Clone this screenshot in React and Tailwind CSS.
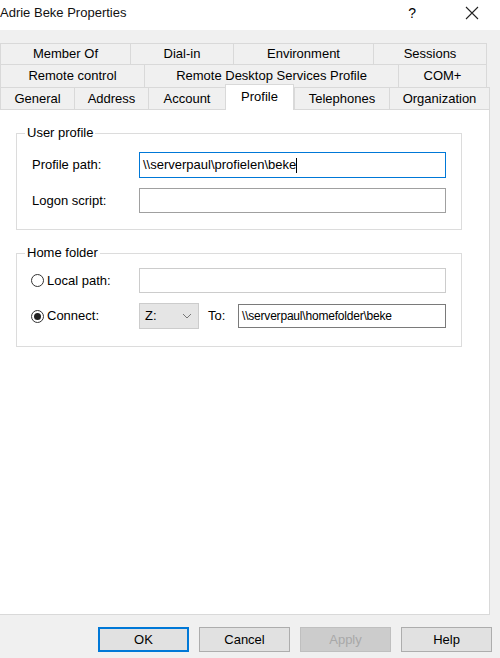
import React from 'react'

const row1 = [
    ['Member Of', 'w-[130px]'],
    ['Dial-in', 'w-[103px]'],
    ['Environment', 'w-[140px]'],
    ['Sessions', 'w-[114px]'],
]
const row2 = [
    ['Remote control', 'w-[144px]'],
    ['Remote Desktop Services Profile', 'w-[254px]'],
    ['COM+', 'w-[89px]'],
]
const row3 = [
    ['General', 'w-[74px]'],
    ['Address', 'w-[74px]'],
    ['Account', 'w-[77px]'],
    ['Profile', 'w-[69px]', true],
    ['Telephones', 'w-[95px]'],
    ['Organization', 'w-[101px]'],
]

function Tab({ label, width, active }) {
    if (active) {
        return (
            <div className={`${width} h-[26px] -mb-px relative z-10 bg-white border border-b-0 border-[#d9d9d9] flex justify-center pt-[2px] shrink-0`}>
                {label}
            </div>
        )
    }
    return (
        <div className={`${width} h-full border-l border-t border-[#d9d9d9] last:border-r flex items-center justify-center shrink-0`}>
            {label}
        </div>
    )
}

function Radio({ checked }) {
    return (
        <span className="w-[13px] h-[13px] rounded-full border border-[#333] bg-white flex items-center justify-center shrink-0">
            {checked && <span className="w-[7px] h-[7px] rounded-full bg-[#222]" />}
        </span>
    )
}

export default function App() {
    return (
        <div className="w-[500px] h-[658px] bg-[#f0f0f0] flex flex-col text-[13px] text-black overflow-hidden" style={{ fontFamily: '"Liberation Sans", Arial, sans-serif' }}>
            {/* title bar */}
            <div className="h-[30px] bg-white flex items-center shrink-0">
                <span className="pb-[4px] text-[#111]">Adrie Beke Properties</span>
                <span className="ml-auto mr-[49px] pb-[4px] text-[14px]">?</span>
                <svg width="14" height="14" viewBox="0 0 14 14" className="mr-[21px] mb-[4px]">
                    <path d="M1 1 L13 13 M13 1 L1 13" stroke="#222" strokeWidth="1.1" />
                </svg>
            </div>

            {/* tabs */}
            <div className="mt-[13px] w-[490px] flex flex-col shrink-0">
                <div className="h-[21px] flex">
                    {row1.map(([l, w]) => <Tab key={l} label={l} width={w} />)}
                </div>
                <div className="h-[23px] flex">
                    {row2.map(([l, w]) => <Tab key={l} label={l} width={w} />)}
                </div>
                <div className="h-[22px] flex items-end">
                    {row3.map(([l, w, a]) => <Tab key={l} label={l} width={w} active={a} />)}
                </div>
            </div>

            {/* panel */}
            <div className="w-[490px] h-[506px] bg-white border-t border-r border-b border-[#d9d9d9] pl-[16px] shrink-0">
                <fieldset className="mt-[16px] w-[446px] border border-[#dcdcdc] pb-[16px]">
                    <legend className="ml-[8px] px-[2px] leading-[14px]">User profile</legend>
                    <div className="mt-[12px] flex items-center pl-[15px]">
                        <span className="w-[107px]">Profile path:</span>
                        <div className="w-[307px] h-[26px] border border-[#0078d7] flex items-center pl-[3px]">
                            <span>\\serverpaul\profielen\beke</span>
                            <span className="w-px h-[15px] bg-black" />
                        </div>
                    </div>
                    <div className="mt-[10px] flex items-center pl-[15px]">
                        <span className="w-[107px]">Logon script:</span>
                        <div className="w-[307px] h-[25px] border border-[#a0a0a0]" />
                    </div>
                </fieldset>

                <fieldset className="mt-[16px] w-[446px] border border-[#dcdcdc] pb-[17px]">
                    <legend className="ml-[8px] px-[2px] leading-[14px]">Home folder</legend>
                    <div className="mt-[8px] flex items-center pl-[14px]">
                        <div className="w-[108px] flex items-center gap-[3px]">
                            <Radio />
                            <span>Local path:</span>
                        </div>
                        <div className="w-[307px] h-[25px] border border-[#cccccc]" />
                    </div>
                    <div className="mt-[10px] flex items-center pl-[14px]">
                        <div className="w-[108px] flex items-center gap-[3px]">
                            <Radio checked />
                            <span>Connect:</span>
                        </div>
                        <div className="w-[60px] h-[26px] bg-[#e5e5e5] border border-[#cccccc] flex items-center pl-[5px] pr-[6px]">
                            <span>Z:</span>
                            <svg width="10" height="6" viewBox="0 0 10 6" className="ml-auto">
                                <path d="M1 1 L5 5 L9 1" fill="none" stroke="#777" strokeWidth="1" />
                            </svg>
                        </div>
                        <span className="ml-[9px] w-[30px]">To:</span>
                        <div className="w-[208px] h-[24px] border border-[#7a7a7a] flex items-center pl-[3px] text-[12px] tracking-[-0.2px]">
                            \\serverpaul\homefolder\beke
                        </div>
                    </div>
                </fieldset>
            </div>

            {/* buttons */}
            <div className="mt-[12px] flex justify-end gap-[10px] pr-[8px]">
                <button className="w-[91px] h-[25px] bg-[#e1e1e1] border-2 border-[#0078d7]">OK</button>
                <button className="w-[91px] h-[25px] bg-[#e1e1e1] border border-[#adadad]">Cancel</button>
                <button className="w-[91px] h-[25px] bg-[#cccccc] border border-[#bfbfbf] text-[#a8a8a8]">Apply</button>
                <button className="w-[91px] h-[25px] bg-[#e1e1e1] border border-[#adadad]">Help</button>
            </div>
        </div>
    )
}
